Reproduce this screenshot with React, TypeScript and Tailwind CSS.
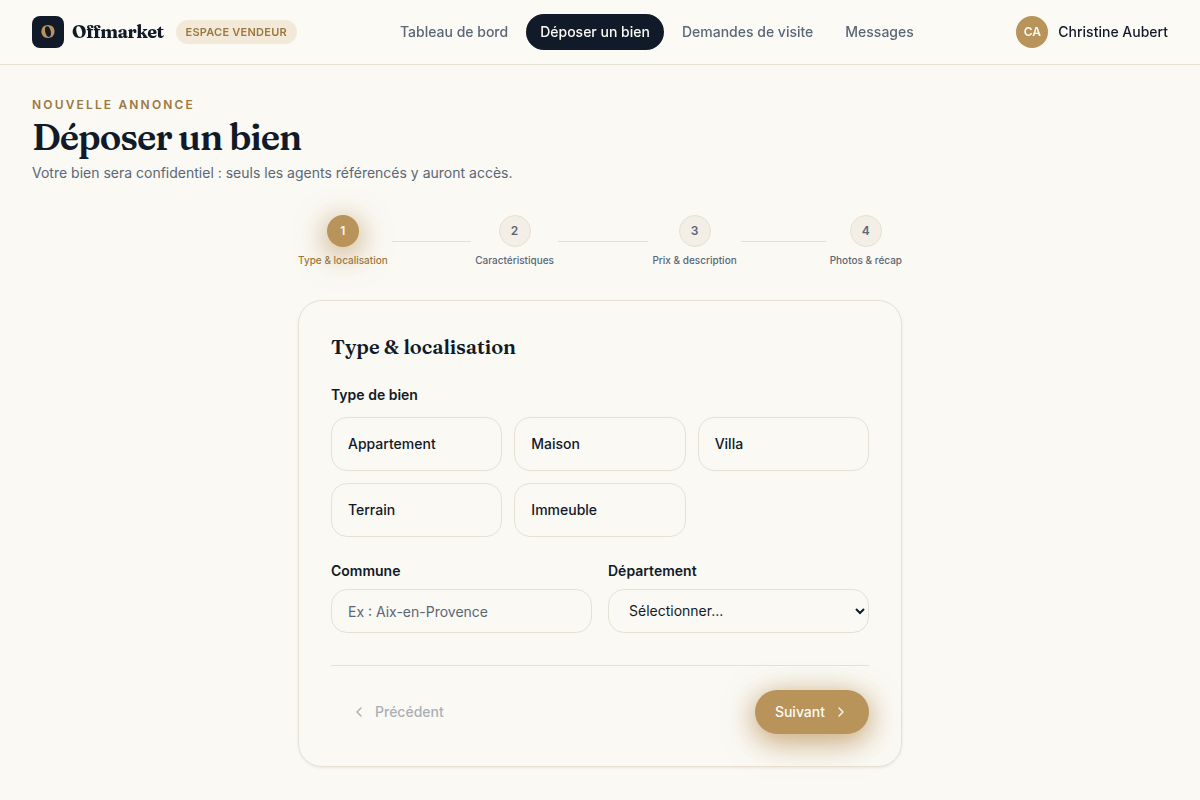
import { useState } from 'react';
import { ChevronLeft, ChevronRight } from 'lucide-react';

const NAV = ['Tableau de bord', 'Déposer un bien', 'Demandes de visite', 'Messages'];
const STEPS = ['Type & localisation', 'Caractéristiques', 'Prix & description', 'Photos & récap'];
const TYPES = ['Appartement', 'Maison', 'Villa', 'Terrain', 'Immeuble'];
const DEPARTEMENTS = ['Bouches-du-Rhône', 'Var', 'Vaucluse', 'Alpes-Maritimes'];

function Header() {
  return (
    <header className="sticky top-0 z-10 border-b border-[#e7e1d3] bg-[#fbfaf5]/90 backdrop-blur">
      <div className="flex h-16 items-center justify-between px-8">
        <div className="flex items-center">
          <span className="flex size-8 items-center justify-center rounded-lg bg-[#111a28] font-['Fraunces','Liberation_Serif',serif] text-lg font-bold text-[#b8935a]">
            O
          </span>
          <span className="ml-2 w-[92px] whitespace-nowrap font-['Fraunces','Liberation_Serif',serif] text-lg font-bold tracking-[-0.028em] text-[#111a28]">
            Offmarket
          </span>
          <span className="ml-3 flex h-6 items-center whitespace-nowrap rounded-full bg-[#f3e9d9] pl-[9.5px] pr-[10.5px] text-[11px] font-semibold tracking-[0.022em] text-[#9c7840]">
            ESPACE VENDEUR
          </span>
        </div>
        <nav className="flex items-center gap-1">
          {NAV.map((item, i) => (
            <a
              key={item}
              href="#"
              className={`flex h-9 items-center rounded-full px-3.5 text-sm font-medium ${
                i === 1 ? 'bg-[#111a28] text-[#fbfaf5]' : 'text-[#5b6777]'
              }`}
            >
              {item}
            </a>
          ))}
        </nav>
        <div className="flex items-center gap-2.5">
          <span className="flex size-8 items-center justify-center rounded-full bg-[#b8935a] text-xs font-semibold text-[#fbfaf5]">
            CA
          </span>
          <span className="text-sm font-medium">Christine Aubert</span>
        </div>
      </div>
    </header>
  );
}

function Stepper({ current }: { current: number }) {
  return (
    <ol className="flex">
      {STEPS.map((label, i) => (
        <li key={label} className={`flex items-center ${i < STEPS.length - 1 ? 'flex-1' : ''}`}>
          <div className="flex flex-col items-center gap-1.5">
            <span
              className={`flex size-8 items-center justify-center rounded-full text-xs font-semibold ${
                i === current
                  ? 'bg-[#b8935a] text-[#fbfaf5] shadow-[0_4px_24px_rgba(184,140,80,0.4),0_8px_32px_rgba(184,140,80,0.55)]'
                  : 'border border-[#e7e1d3] bg-[#f3eee6] text-[#5b6777]'
              }`}
            >
              {i + 1}
            </span>
            <span
              className={`whitespace-nowrap text-[10px] font-medium leading-[15px] ${
                i === current ? 'text-[#9c7840]' : 'text-[#5b6777]'
              }`}
            >
              {label}
            </span>
          </div>
          {i < STEPS.length - 1 && <div className="mx-1 h-px flex-1 bg-[#e3dfd5]" />}
        </li>
      ))}
    </ol>
  );
}

export default function App() {
  const [type, setType] = useState('');
  const [step] = useState(0);

  return (
    <div className="min-h-screen bg-[#faf9f4] font-['Inter',sans-serif] text-[#111a28]">
      <Header />
      <main className="px-8 pt-8">
        <p className="text-xs font-semibold tracking-[0.18em] text-[#9c7840]">NOUVELLE ANNONCE</p>
        <h1 className="mt-1 font-['Fraunces','Liberation_Serif',serif] text-4xl font-semibold leading-10 tracking-[-0.028em]">
          Déposer un bien
        </h1>
        <p className="mt-1.5 text-sm text-[#5b6777]">
          Votre bien sera confidentiel : seuls les agents référencés y auront accès.
        </p>

        <div className="mx-auto mt-8 w-[604px]">
          <Stepper current={step} />

          <section className="mt-8 rounded-3xl border border-[#e7e1d3] p-8 shadow-[0_1px_3px_rgba(17,26,40,0.08)]">
            <h2 className="font-['Fraunces','Liberation_Serif',serif] text-xl font-semibold leading-7 tracking-[-0.0025em]">
              Type & localisation
            </h2>

            <p className="mt-6 text-sm font-semibold">Type de bien</p>
            <div className="mt-3 grid grid-cols-3 gap-3">
              {TYPES.map((t) => (
                <button
                  key={t}
                  type="button"
                  onClick={() => setType(t)}
                  className={`h-[54px] rounded-2xl border px-4 text-left text-sm font-medium ${
                    type === t ? 'border-[#b8935a]' : 'border-[#e7e1d3]'
                  }`}
                >
                  {t}
                </button>
              ))}
            </div>

            <div className="mt-6 grid grid-cols-2 gap-4">
              <label className="flex flex-col gap-2 text-sm font-semibold">
                Commune
                <input
                  placeholder="Ex : Aix-en-Provence"
                  className="h-11 w-full rounded-2xl border border-[#e7e1d3] bg-transparent px-4 font-normal placeholder:text-[#5b6777]"
                />
              </label>
              <label className="flex flex-col gap-2 text-sm font-semibold">
                Département
                <select className="h-11 w-full rounded-2xl border border-[#e7e1d3] bg-transparent px-4 pb-px font-normal">
                  <option value="">Sélectionner...</option>
                  {DEPARTEMENTS.map((d) => (
                    <option key={d}>{d}</option>
                  ))}
                </select>
              </label>
            </div>

            <div className="mt-8 flex items-center justify-between border-t border-[#e7e1d3] pt-6">
              <button
                type="button"
                disabled={step === 0}
                className="flex h-11 items-center gap-2 rounded-full px-5 text-sm font-medium text-[#5b6777] disabled:opacity-50"
              >
                <ChevronLeft className="size-4" />
                Précédent
              </button>
              <button
                type="button"
                className="flex h-11 items-center gap-2 rounded-full bg-[#b8935a] px-5 text-sm font-medium text-[#fbfaf5] shadow-[0_4px_24px_rgba(184,140,80,0.4),0_8px_32px_rgba(184,140,80,0.55)]"
              >
                Suivant
                <ChevronRight className="size-4" />
              </button>
            </div>
          </section>
        </div>
      </main>
    </div>
  );
}
